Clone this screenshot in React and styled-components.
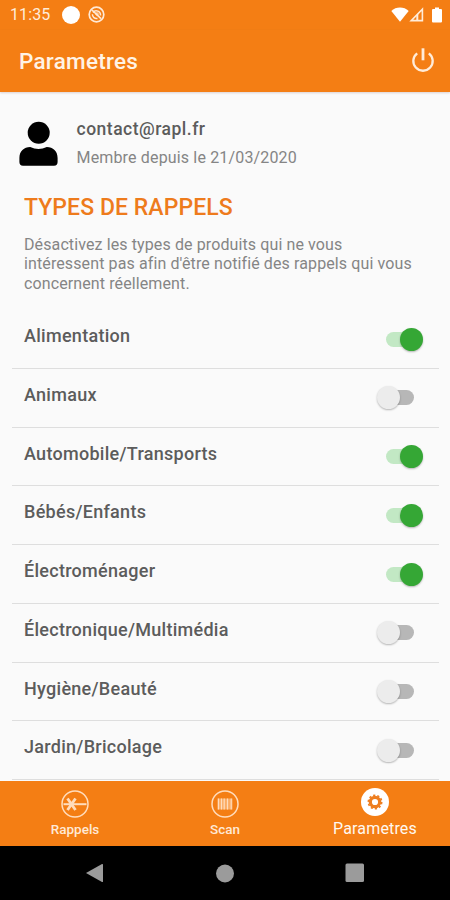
import React, { useState } from 'react'
import styled, { createGlobalStyle } from 'styled-components';

const GlobalStyle = createGlobalStyle`
*{
    box-sizing:border-box;
}
body{
    margin:0;
    font-family:Roboto, sans-serif;
    background-color:#fafafa;
}
svg{
    display:block;
}
`
const Screen = styled.div`
width:450px;
height:900px;
display:flex;
flex-direction:column;
overflow:hidden;
background-color:#fafafa;
`
const StatusBar = styled.div`
height:30px;
flex:none;
display:flex;
align-items:center;
justify-content:space-between;
padding:0 8px 0 10px;
background-color:#f47e14;
color:white;
`
const StatusGroup = styled.div`
display:flex;
align-items:center;
gap:${props => props.$gap}px;
padding-bottom:1px;
`
const Clock = styled.span`
width:43px;
font-size:16px;
line-height:30px;
letter-spacing:0.1px;
white-space:nowrap;
color:#ffecd9;
`
const Toolbar = styled.header`
height:62px;
flex:none;
display:flex;
align-items:center;
justify-content:space-between;
padding:0 15px 0 19px;
background-color:#f47e14;
box-shadow:0 1px 2px rgba(120,70,70,0.22);
`
const ToolbarTitle = styled.h1`
margin:0;
font-size:22.5px;
font-weight:500;
line-height:62px;
letter-spacing:0.25px;
color:#fff3e6;
`
const IconButton = styled.button`
border:none;
padding:0;
margin-bottom:3px;
background:none;
cursor:pointer;
`
const Content = styled.main`
height:689px;
flex:none;
overflow:hidden;
`
const Profile = styled.section`
display:flex;
padding:25px 19px 0;
height:95px;
`
const Avatar = styled.div`
width:57.5px;
padding-top:4px;
`
const Email = styled.div`
font-size:17.5px;
font-weight:500;
line-height:24px;
letter-spacing:0.5px;
color:#5c5c5c;
`
const Member = styled.div`
margin-top:5px;
font-size:16px;
line-height:24px;
letter-spacing:0.16px;
color:#858585;
`
const SectionTitle = styled.h2`
margin:0;
padding-left:24px;
font-size:23px;
font-weight:500;
line-height:42px;
letter-spacing:0.06px;
color:#ee7b1c;
`
const Description = styled.p`
margin:0;
padding:6px 24px 0;
height:81px;
font-size:16px;
line-height:19.3px;
letter-spacing:0.11px;
white-space:pre-line;
color:#858585;
`
const List = styled.div`
margin:0 11px 0 12px;
`
const Row = styled.div`
height:58.75px;
display:flex;
justify-content:space-between;
padding:0 16px 0 12px;
border-bottom:1.5px solid #dedede;
`
const Label = styled.span`
font-size:18px;
font-weight:500;
line-height:52px;
letter-spacing:0.28px;
color:#5c5c5c;
`
const Switch = styled.button`
width:46px;
height:24px;
margin-top:17px;
padding:0 9px;
border:none;
background:none;
display:flex;
align-items:center;
cursor:pointer;
`
const Track = styled.span`
width:28px;
height:15px;
display:flex;
align-items:center;
justify-content:${props => props.$on ? 'flex-end' : 'flex-start'};
border-radius:8px;
background-color:${props => props.$on ? '#c2e8c4' : '#b7b7b7'};
`
const Thumb = styled.span`
width:23px;
height:23px;
flex:none;
margin:0 -9px;
border-radius:50%;
background-color:${props => props.$on ? '#35a735' : '#ececec'};
box-shadow:0 1px 2px rgba(0,0,0,0.28);
`
const TabBar = styled.nav`
height:65px;
flex:none;
display:grid;
grid-template-columns:repeat(3, 1fr);
background-color:#f47e14;
`
const Tab = styled.a`
display:flex;
flex-direction:column;
align-items:center;
padding-top:${props => props.$active ? 7 : 9}px;
color:${props => props.$active ? '#fff8f0' : '#ffe9d6'};
cursor:pointer;
`
const TabLabel = styled.span`
margin-top:${props => props.$active ? 3 : 1}px;
font-size:${props => props.$active ? 16 : 13.5}px;
font-weight:${props => props.$active ? 400 : 500};
line-height:20px;
letter-spacing:${props => props.$active ? 0.15 : 0}px;
`
const SystemNav = styled.footer`
height:54px;
flex:none;
display:flex;
align-items:center;
justify-content:space-between;
padding:0 85px;
background-color:black;
`

const types = [
    { name: 'Alimentation', on: true },
    { name: 'Animaux', on: false },
    { name: 'Automobile/Transports', on: true },
    { name: 'Bébés/Enfants', on: true },
    { name: 'Électroménager', on: true },
    { name: 'Électronique/Multimédia', on: false },
    { name: 'Hygiène/Beauté', on: false },
    { name: 'Jardin/Bricolage', on: false },
]

const MutedIcon = () => (
    <svg width="17" height="17" viewBox="0 0 17 17" fill="none" stroke="#ffe9d6">
        <circle cx="8.5" cy="8.5" r="7.3" strokeWidth="1.7" />
        <path d="M5 6.5A4.2 4.2 0 0 1 12.5 9.5M4.4 8.3A4.2 4.2 0 0 0 9.5 12.5" strokeWidth="1.5" />
        <path d="M4 4 13 12.6" strokeWidth="1.7" />
        <circle cx="9" cy="8" r="1.2" strokeWidth="1" />
    </svg>
)

const WifiIcon = () => (
    <svg width="18" height="15" viewBox="0 0 18 15" fill="#fff">
        <path d="M0.3 4C5 -0.6 13 -0.6 17.7 4L9 14.7z" />
    </svg>
)

const SignalIcon = () => (
    <svg width="15" height="15" viewBox="0 0 15 15">
        <path d="M13.4 2.2V13.6H2.2z" fill="none" stroke="#ffecd9" strokeWidth="1.6" />
        <path d="M7.3 8.2 9.3 6.2V13.6H7.3z" fill="#ffecd9" />
    </svg>
)

const BatteryIcon = () => (
    <svg width="10" height="16" viewBox="0 0 10 16" fill="#fff">
        <path d="M3 0.5h4V2h2a1 1 0 0 1 1 1v11.5a1 1 0 0 1-1 1H1a1 1 0 0 1-1-1V3a1 1 0 0 1 1-1h2z" />
    </svg>
)

const PowerIcon = () => (
    <svg width="24" height="24" viewBox="0 0 24 24" fill="none" stroke="#ffecd9" strokeWidth="2.3">
        <path d="M12 0.3V12.3" strokeWidth="2.8" />
        <path d="M6.2 5.3A9.7 9.7 0 1 0 17.8 5.3" />
    </svg>
)

const UserIcon = () => (
    <svg width="39" height="45" viewBox="0 0 39 45">
        <circle cx="19.7" cy="11.7" r="11" />
        <path d="M0.4 41V37C0.4 30 5 26 11.2 26Q19.5 30 27.8 26C34 26 38.6 30 38.6 37V41Q38.6 44.7 35 44.7H4Q0.4 44.7 0.4 41z" />
    </svg>
)

const RecallIcon = () => (
    <svg width="28" height="28" viewBox="0 0 28 28" fill="none" stroke="#ffdcbc">
        <circle cx="14" cy="14" r="13" strokeWidth="1.5" />
        <path d="M2.5 14.2H25.5" strokeWidth="2" />
        <path d="M6.5 8.5 14.5 20M14.5 8.5 6.5 20" strokeWidth="2.8" />
    </svg>
)

const ScanIcon = () => (
    <svg width="28" height="28" viewBox="0 0 28 28" fill="none" stroke="#ffdcbc">
        <circle cx="14" cy="14" r="13" strokeWidth="1.5" />
        <rect x="6.5" y="8.5" width="15" height="11" fill="#ffc998" stroke="none" opacity="0.6" />
        <path d="M7.5 8.5V19.5M10.5 8.5V19.5M13.2 8.5V19.5M16.5 8.5V19.5M20.2 8.5V19.5" strokeWidth="1.2" />
    </svg>
)

const GearIcon = () => (
    <svg width="28" height="28" viewBox="0 0 28 28" fill="none" stroke="#ee7e20">
        <circle cx="14" cy="14" r="14" fill="#fff" stroke="none" />
        <circle cx="14" cy="14" r="4.7" strokeWidth="3.2" />
        <circle cx="14" cy="14" r="6.7" strokeWidth="1.6" strokeDasharray="2.2 2.01" />
    </svg>
)

const App = () => {
    const [items, setItems] = useState(types)

    const toggle = (name) => {
        setItems(items.map(item => item.name === name ? { ...item, on: !item.on } : item))
    }

    return (
        <Screen>
            <GlobalStyle />
            <StatusBar>
                <StatusGroup $gap={8.5}>
                    <Clock>11:35</Clock>
                    <svg width="18" height="18"><circle cx="9" cy="9" r="9" fill="#fff" /></svg>
                    <MutedIcon />
                </StatusGroup>
                <StatusGroup $gap={0}>
                    <WifiIcon />
                    <SignalIcon />
                    <svg width="8" height="1" />
                    <BatteryIcon />
                </StatusGroup>
            </StatusBar>
            <Toolbar>
                <ToolbarTitle>Parametres</ToolbarTitle>
                <IconButton><PowerIcon /></IconButton>
            </Toolbar>
            <Content>
                <Profile>
                    <Avatar><UserIcon /></Avatar>
                    <div>
                        <Email>contact@rapl.fr</Email>
                        <Member>Membre depuis le 21/03/2020</Member>
                    </div>
                </Profile>
                <SectionTitle>TYPES DE RAPPELS</SectionTitle>
                <Description>
                    {"Désactivez les types de produits qui ne vous\nintéressent pas afin d'être notifié des rappels qui vous\nconcernent réellement."}
                </Description>
                <List>
                    {items.map(item => (
                        <Row key={item.name}>
                            <Label>{item.name}</Label>
                            <Switch onClick={() => toggle(item.name)}>
                                <Track $on={item.on}><Thumb $on={item.on} /></Track>
                            </Switch>
                        </Row>
                    ))}
                </List>
            </Content>
            <TabBar>
                <Tab>
                    <RecallIcon />
                    <TabLabel>Rappels</TabLabel>
                </Tab>
                <Tab>
                    <ScanIcon />
                    <TabLabel>Scan</TabLabel>
                </Tab>
                <Tab $active>
                    <GearIcon />
                    <TabLabel $active>Parametres</TabLabel>
                </Tab>
            </TabBar>
            <SystemNav>
                <svg width="19" height="20" viewBox="0 0 19 20" fill="#9b9b9b"><path d="M1 10 17 1Q18 0.6 18 1.6V18.4Q18 19.4 17 19z" /></svg>
                <svg width="19" height="19"><circle cx="10" cy="9.5" r="9" fill="#9b9b9b" /></svg>
                <svg width="20" height="20"><rect x="0.5" y="0.5" width="18.5" height="18.5" rx="1.5" fill="#9b9b9b" /></svg>
            </SystemNav>
        </Screen>
    )
}

export default App
